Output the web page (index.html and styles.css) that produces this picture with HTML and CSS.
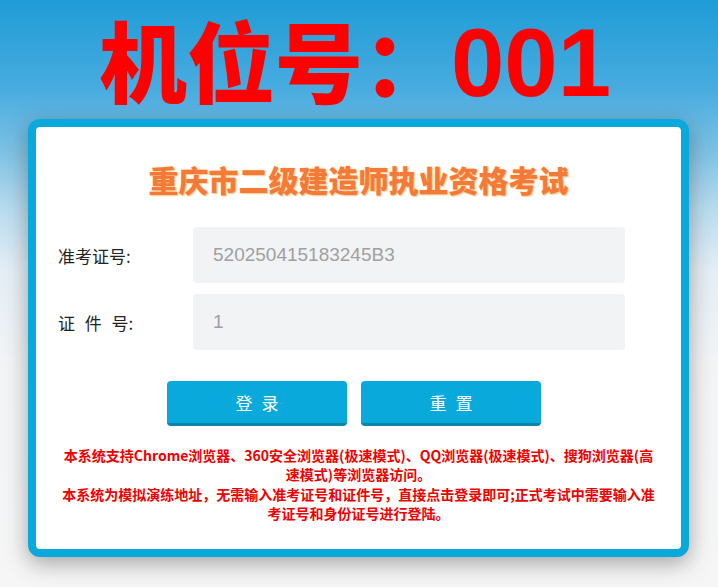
FILE: index.html
```html
<!DOCTYPE html>
<html lang="zh-CN">
<head>
<meta charset="utf-8">
<title>重庆市二级建造师执业资格考试</title>
<link rel="stylesheet" href="styles.css">
</head>
<body>
<div class="page">
  <header class="seat">
    <h1 class="seat-title"><span class="seat-cn">机位号：</span><span class="seat-no">001</span></h1>
  </header>
  <main class="card">
    <div class="card-inner">
      <h2 class="exam-title">重庆市二级建造师执业资格考试</h2>
      <form class="login-form">
        <div class="field">
          <label class="field-label">准考证号:</label>
          <div class="field-input">520250415183245B3</div>
        </div>
        <div class="field">
          <label class="field-label spaced">证 件 号:</label>
          <div class="field-input">1</div>
        </div>
        <div class="actions">
          <button type="button" class="btn">登 录</button>
          <button type="button" class="btn">重 置</button>
        </div>
      </form>
      <div class="notice">
        <p>本系统支持Chrome浏览器、360安全浏览器(极速模式)、QQ浏览器(极速模式)、搜狗浏览器(高速模式)等浏览器访问。</p>
        <p>本系统为模拟演练地址，无需输入准考证号和证件号，直接点击登录即可;正式考试中需要输入准考证号和身份证号进行登陆。</p>
      </div>
    </div>
  </main>
</div>
</body>
</html>
```

FILE: styles.css
```css
* { box-sizing: border-box; }

html, body {
  margin: 0;
  padding: 0;
  height: 100%;
}

body {
  font-family: "Noto Sans CJK SC", "Liberation Sans", sans-serif;
  background: linear-gradient(to bottom,
    #1f9cd6 0px,
    #49ace0 90px,
    #7cc1e4 150px,
    #b9dcef 210px,
    #e4eef5 270px,
    #f2f4f6 360px,
    #f6f6f6 587px);
  overflow: hidden;
}

.page {
  width: 718px;
  height: 587px;
}

.seat {
  height: 119px;
  display: flex;
  justify-content: center;
  align-items: flex-start;
  padding-top: 10px;
}

.seat-title {
  margin: 0 0 0 -8px;
  padding: 0;
  display: flex;
  align-items: baseline;
  color: #ff0000;
  white-space: nowrap;
}

.seat-cn {
  font-family: "Noto Sans CJK SC", sans-serif;
  font-weight: 900;
  font-size: 88px;
  line-height: 96px;
}

.seat-no {
  font-family: "Liberation Sans", "Noto Sans", sans-serif;
  font-weight: 700;
  font-size: 96px;
  line-height: 96px;
}

.card {
  margin-left: 28px;
  width: 661px;
  height: 438px;
  border: 8px solid #0aa9dc;
  border-radius: 12px;
  background: #ffffff;
  box-shadow: 0 6px 22px rgba(60, 60, 60, 0.45);
}

.card-inner {
  padding: 31px 0 0 0;
}

.exam-title {
  margin: 0;
  text-align: center;
  font-size: 30px;
  line-height: 42px;
  font-weight: 900;
  color: #f47a3a;
  text-shadow: 0 0 2px #ffd9a0, 1px 1px 1px #ffc98a;
}

.login-form {
  margin-top: 27px;
}

.field {
  display: flex;
  align-items: center;
  padding-left: 22px;
  margin-bottom: 11px;
}

.field-label {
  width: 135px;
  font-size: 17px;
  color: #222;
}

.field-label.spaced {
  word-spacing: 6px;
}

.field-input {
  width: 432px;
  height: 56px;
  background: #f2f3f5;
  border-radius: 4px;
  padding-left: 20px;
  display: flex;
  align-items: center;
  font-family: "Liberation Sans", sans-serif;
  font-size: 19px;
  color: #a0a0a0;
}

.actions {
  display: flex;
  justify-content: center;
  gap: 14px;
  margin-top: 31px;
  padding-right: 9px;
}

.btn {
  width: 180px;
  height: 45px;
  border: none;
  border-bottom: 3px solid #0b84aa;
  border-radius: 4px;
  background: #0aa9dc;
  color: #ffffff;
  font-family: "Noto Sans CJK SC", sans-serif;
  font-size: 17px;
  word-spacing: 5px;
  padding: 0;
}

.notice {
  margin: 20px auto 0;
  width: 596px;
  text-align: center;
  color: #ee0000;
  font-weight: 700;
  font-size: 14px;
  line-height: 18.5px;
}

.notice p {
  margin: 0 0 2px;
}
```
